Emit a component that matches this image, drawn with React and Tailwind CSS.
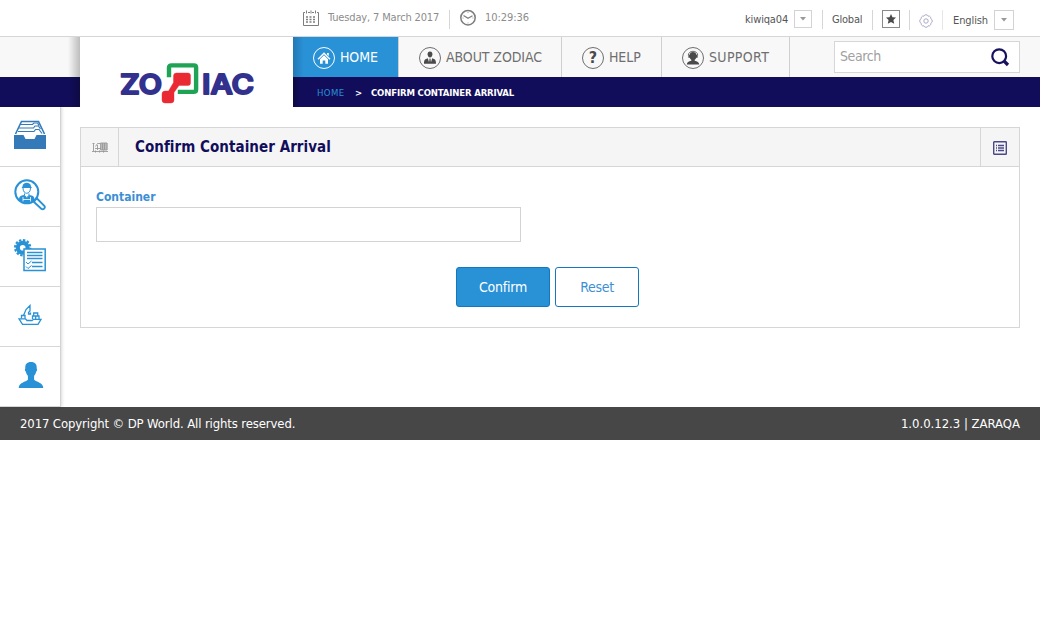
import React from "react";

function Label({ className = "", children }) {
  return <span className={"block shrink-0 whitespace-nowrap " + className}>{children}</span>;
}

function Divider({ className = "" }) {
  return <span className={"mt-[10px] h-[19px] w-px shrink-0 bg-[#d6d6d6] " + className} />;
}

function CalendarIcon() {
  return (
    <svg className="mt-[9px] shrink-0" width="16" height="17" viewBox="0 0 16 17" fill="none" stroke="#7d7d7d">
      <path d="M2 3.500H.5v13h15v-13H14M5 3.500h2M9 3.500h2" />
      <path d="M3.500 1.500v3M8 1.500v3M12.500 1.500v3" />
      <path d="M3 8h2m1.500 0h2M10 8h2M3 10.500h2m1.500 0h2m1.500 0h2M3 13h2m1.500 0h2m1.500 0h2" strokeWidth="1.300" />
    </svg>
  );
}

function ClockIcon() {
  return (
    <svg className="mt-[9px] shrink-0" width="16" height="17" viewBox="0 0 16 17" fill="none" stroke="#7d7d7d">
      <circle cx="8" cy="8.700" r="7.200" strokeWidth="1.500" />
      <path d="M3.500 6.500 8 9.200l4.500-2.500" strokeWidth="1.200" />
      <path d="M8 3v1M8 13.500v1M2.500 9h1M12.500 9h1" strokeWidth=".7" />
    </svg>
  );
}

function DropButton({ className }) {
  return (
    <span className={"mt-[10px] flex shrink-0 items-center justify-center border border-[#d3d3d3] " + className}>
      <svg width="6" height="4" viewBox="0 0 6 4" fill="#999">
        <path d="M0 0h6L3 3.500z" />
      </svg>
    </span>
  );
}

function TopBar() {
  return (
    <div className="flex h-[37px] border-b border-[#d6d6d6] pl-[303px] text-[11px] leading-[14px] text-[#555]">
      <CalendarIcon />
      <Label className="ml-[9px] mt-[11px] w-[121px] tracking-[-0.15px] text-[#8c8c8c]">Tuesday, 7 March 2017</Label>
      <Divider className="mr-[10px]" />
      <ClockIcon />
      <Label className="ml-[9px] mt-[11px] w-[260px] tracking-[-0.05px] text-[#8c8c8c]">10:29:36</Label>
      <Label className="mt-[13px] w-[49px] tracking-[-0.15px]">kiwiqa04</Label>
      <DropButton className="h-[18px] w-[18px]" />
      <Divider className="ml-[10px]" />
      <Label className="ml-[9px] mt-[13px] w-[40px] tracking-[-0.2px]">Global</Label>
      <Divider className="h-[20px]" />
      <span className="ml-[9px] mt-[10px] flex h-[18px] w-[18px] shrink-0 items-center justify-center border border-[#8a8a8a]">
        <svg width="10" height="10" viewBox="0 0 10 10" fill="#4a4a4a">
          <path d="m5 0 1.500 3.300 3.500.3-2.600 2.500.8 3.700L5 7.900 1.800 9.800l.8-3.700L0 3.600l3.500-.3z" />
        </svg>
      </span>
      <Divider className="ml-[9px] h-[20px]" />
      <svg className="ml-[9px] mt-[14px] shrink-0" width="14" height="14" viewBox="0 0 14 14" fill="none" stroke="#aaa9c9">
        <path d="M5.500 1.200 7 .7l1.500.5.6 1 1.300-.1 1.300 1.200.1 1.400 1 .8.500 1.500-.5 1.500-1 .8-.1 1.400-1.300 1.200-1.300-.1-.6 1-1.500.5-1.500-.5-.6-1-1.300.1-1.300-1.200-.1-1.400-1-.8L.7 7l.5-1.500 1-.8.1-1.400 1.300-1.200 1.300.1z" />
        <circle cx="7" cy="7" r="2.200" />
      </svg>
      <Divider className="ml-[9px] h-[20px] bg-[#e6e6e6]" />
      <Label className="ml-[10px] mt-[14px] w-[41px] tracking-[-0.1px]">English</Label>
      <DropButton className="h-[20px] w-[20px]" />
    </div>
  );
}

function Logo() {
  return (
    <svg width="134" height="41" viewBox="0 0 134 41" className="ml-[40px] mt-[26px]" fill="#33318e" stroke="#33318e" strokeWidth="1.800" strokeLinejoin="round">
      <g fontFamily="Inter, sans-serif" fontWeight="600" fontSize="27">
        <text x="0" y="30.700" textLength="42" lengthAdjust="spacingAndGlyphs">ZO</text>
        <text x="82" y="30.700" textLength="52" lengthAdjust="spacingAndGlyphs">IAC</text>
      </g>
      <path d="M49 12V4.500Q49 2.400 51.500 2.400H74Q76.100 2.400 76.100 4.500V26.500Q76.100 28.900 73.500 28.900H60" fill="none" stroke="#1fa455" strokeWidth="4.400" strokeLinecap="square" strokeLinejoin="miter" />
      <path d="M56.500 10h11.500q2.500 0 2.500 2.500v7.500q0 2.500-2.500 2.500H59L54 29.500v7.500q0 3-3 3H45q-3 0-3-3v-6q0-3 3-3h3.500l5-8.500V13q0-3 3-3z" fill="#ea2a33" stroke="#ea2a33" strokeWidth=".4" />
    </svg>
  );
}

function HomeGlyph() {
  return (
    <g>
      <path d="M4.500 11.700 11 5.300l6.500 6.400-1 1L11 7.300l-5.500 5.400zM14 6h1.800v3L14 7.500z" />
      <path d="m7 12.200 4-4 4 4v4.600h-2.700v-3.300H9.700v3.300H7z" />
    </g>
  );
}

function PersonGlyph() {
  return (
    <g fill="#4a4a4a">
      <path d="M11 4.500c1.700 0 2.500 1.100 2.400 2.800-.1 1.600-.9 3.200-2.400 3.200S8.700 8.900 8.600 7.300C8.500 5.600 9.300 4.500 11 4.500z" />
      <path d="M5 16.800c0-3.700.6-4.600 3.800-5.600l1.200 4 .5-2.600-.4-.9h1.800l-.4.9.5 2.600 1.200-4c3.200 1 3.800 1.900 3.800 5.600z" />
    </g>
  );
}

function SupportGlyph() {
  return (
    <g fill="#4a4a4a">
      <path d="M11 5c2.200 0 3.200 1.200 3.300 2.800h1.300v3h-1.400c-.3.900-.8 1.500-1.500 2v.9c2.600.5 4.300 1.300 4.500 3.700H4.800c.2-2.400 1.900-3.200 4.500-3.700v-.9c-.7-.5-1.200-1.100-1.500-2H6.400v-3h1.300C7.800 6.200 8.800 5 11 5z" />
      <path d="M6.300 8.200C6.300 3 15.700 3 15.700 8.200" fill="none" stroke="#4a4a4a" strokeWidth=".8" />
    </g>
  );
}

function NavItem({ className, glyph, mark, children }) {
  return (
    <a className={"flex h-[40px] shrink-0 border-r border-[#cfcfcf] pl-[20px] " + className}>
      <span className="mt-[10px] flex h-[22px] w-[22px] shrink-0 items-center justify-center rounded-full border border-current">
        {mark ? (
          <span className="text-[16px] font-bold leading-[20px] text-[#4a4a4a]">{mark}</span>
        ) : (
          <svg width="22" height="22" viewBox="0 0 22 22" fill="currentColor" className="shrink-0">
            {glyph}
          </svg>
        )}
      </span>
      <Label className="ml-[5px] mt-[11px] text-[14px] leading-[18px]">{children}</Label>
    </a>
  );
}

function Header() {
  return (
    <div className="flex h-[70px]">
      <div className="flex w-[80px] shrink-0 flex-col">
        <div className="h-[40px] bg-linear-to-r from-[#f8f8f8] from-85% to-[#bdbdbd]" />
        <div className="h-[30px] bg-linear-to-r from-[#120d5b] from-85% to-[#0d0a43]" />
      </div>
      <div className="w-[213px] shrink-0 bg-white">
        <Logo />
      </div>
      <div className="flex flex-1 flex-col">
        <div className="flex h-[40px] bg-[#f8f8f8] text-[#6f6f6f]">
          <NavItem className="w-[106px] bg-linear-to-r from-[#2279b3] to-[#2991d6] to-10% tracking-[-0.1px] text-white" glyph={<HomeGlyph />}>HOME</NavItem>
          <NavItem className="w-[163px] tracking-[-0.08px]" glyph={<PersonGlyph />}>ABOUT ZODIAC</NavItem>
          <NavItem className="w-[100px] tracking-[-0.1px]" mark="?">HELP</NavItem>
          <NavItem className="w-[128px] tracking-[0.35px]" glyph={<SupportGlyph />}>SUPPORT</NavItem>
          <div className="ml-[44px] mt-[4px] flex h-[32px] w-[186px] border border-[#d6d6d6] bg-white pl-[5px]">
            <Label className="mt-[5px] w-[150px] text-[14px] leading-[18px] tracking-[-0.4px] text-[#a0a0a0]">Search</Label>
            <svg className="mt-[5px] shrink-0" width="20" height="20" viewBox="0 0 20 20" fill="none" stroke="#17125d">
              <circle cx="9.200" cy="9.200" r="6.900" strokeWidth="2.200" />
              <path d="m14 14 4 4" strokeWidth="3.200" />
            </svg>
          </div>
        </div>
        <div className="flex h-[30px] bg-linear-to-r from-[#0d0a43] to-[#120d5b] to-1% pl-[24px] pt-[9px] text-[9.5px] leading-[13px] text-white">
          <Label className="w-[38px] tracking-[0.4px] text-[#2991d6]">HOME</Label>
          <Label className="w-[16px] font-bold">&gt;</Label>
          <Label className="font-bold tracking-[-0.15px]">CONFIRM CONTAINER ARRIVAL</Label>
        </div>
      </div>
    </div>
  );
}

function TrayIcon() {
  return (
    <svg width="32" height="30" viewBox="0 0 32 30" fill="#357ab8">
      <path d="M0 15h9.500l2 4h9l2-4H32v14H0z" />
      <g fill="none" stroke="#357ab8">
        <path d="M1.500 14 7.500 1.500h17l6 12.500" strokeWidth="1.600" />
        <path d="M6.500 4.500h12l1.500-1.500h3.500l1.500 2.500M5 8h14.500l1.500-2h3.500l2 3M4 11.500h16l1.500-2H25l3 4" strokeWidth="1.200" />
      </g>
    </svg>
  );
}

function InspectIcon() {
  return (
    <svg width="32" height="32" viewBox="0 0 32 32" fill="none" stroke="#2991d6">
      <circle cx="12.800" cy="12.800" r="11.500" strokeWidth="2" />
      <path d="m21 21 2-1.500 7.500 7.500c1 2-1 4-3 3L20 23z" strokeWidth="1.900" />
      <path d="M8.500 7.500c0-5 8.500-5 8.500 0l1 1.500H7.500z" fill="#2991d6" stroke="none" />
      <path d="M9 9c0 7 7.500 7 7.500 0M10.500 14.500v2l2.300 2 2.200-2v-2" />
      <path d="M5 21c0-4 2-4.500 5-5l2.800 3 2.700-3c3 .5 5 1 5 5-4 4-11.500 4-15.500 0z" fill="#2991d6" stroke="none" />
      <path d="M9 18v4.500M16.500 18v4.500M9 20.500h7.500" stroke="white" strokeWidth=".8" />
    </svg>
  );
}

function TasksIcon() {
  return (
    <svg width="32" height="33" viewBox="0 0 32 33" fill="none" stroke="#2991d6">
      <circle cx="8.700" cy="8.700" r="4.900" strokeWidth="4.200" />
      <circle cx="8.700" cy="8.700" r="7.700" strokeWidth="2" strokeDasharray="2.400 1.632" />
      <path d="M10 10h21.200v21.500H10z" fill="white" strokeWidth="1.500" />
      <path d="M13 13.500h15.500M13 16.500h15.500M13 19.500h15.500M18 23.500h10.500M18 27.500h10.500" strokeWidth="1.500" />
      <path d="m12 23 2 2 3.500-3M12 27.500l2 2 3.500-3" />
    </svg>
  );
}

function ShipIcon() {
  return (
    <svg width="24" height="22" viewBox="0 0 24 22" fill="none" stroke="#2991d6" strokeWidth="1.300">
      <path d="M1 14.800h6.500l1.500 1.700h5l1.500-1.200h7.500l-3 5H4.500z" />
      <path d="M3.500 14.500v-3h3.500v3M5.500 11.500 8 5.500 12 1.500v5.500L10.500 8.500v1.500h2V8.500M14.500 15v-3h6.500v3M17.700 15v-3M15.700 12V9h4v3" />
    </svg>
  );
}

function UserIcon() {
  return (
    <svg width="26" height="27" viewBox="0 0 26 27" fill="#2991d6">
      <path d="M13 0c4.200 0 6 2.300 5.700 6.500.8.700.4 2.500-.6 3.300-.3 1.700-1 3-2 4v4c2 2 9.200 3 9.200 8.200H.7c0-5.200 7.200-6.200 9.200-8.200v-4c-1-1-1.700-2.300-2-4-1-.8-1.400-2.600-.6-3.300C7 2.300 8.800 0 13 0z" />
    </svg>
  );
}

function Sidebar() {
  const items = [
    [<TrayIcon key="i" />, "pt-[13px]"],
    [<InspectIcon key="i" />, "pt-[12px]"],
    [<TasksIcon key="i" />, "pt-[12px]"],
    [<ShipIcon key="i" />, "pt-[17px]"],
    [<UserIcon key="i" />, "pt-[15px] pl-px"],
  ];
  return (
    <nav className="w-[61px] shrink-0 border-r border-[#d3d3d3] shadow-[1px_0_3px_rgba(0,0,0,0.15)]">
      {items.map(([icon, pad], i) => (
        <a key={i} className={"flex h-[60px] justify-center border-b border-[#d6d6d6] " + pad}>
          {icon}
        </a>
      ))}
    </nav>
  );
}

function Panel() {
  return (
    <section className="ml-[19px] mt-[20px] h-[201px] w-[940px] border border-[#d6d6d6]">
      <div className="flex h-[39px] border-b border-[#d6d6d6] bg-[#f5f5f5]">
        <div className="w-[38px] shrink-0 border-r border-[#d6d6d6] pl-[11px] pt-[14px]">
          <svg width="16" height="11" viewBox="0 0 16 11" fill="none" stroke="#999">
            <path d="M9 1h6.500v7H9z" fill="#bbb" stroke="none" />
            <path d="M.5 1.500h2M1.500 1v8M3.500 4.500l2-3h3M5.500 3v5M8.500 1h6.500v7H8.500zM10.500 1v7M12.500 1v7M3 6.500h5.500M0 9.500h16" strokeWidth=".9" />
            <path d="M3.500 8.500v2M7.500 8.500v2M11.500 8.500v2" />
          </svg>
        </div>
        <h1 className="flex-1 whitespace-nowrap pl-[16px] pt-[9px] text-[15px] font-bold leading-[20px] tracking-[0.05px] text-[#120d5b]">Confirm Container Arrival</h1>
        <div className="w-[39px] shrink-0 border-l border-[#d6d6d6] pl-[12px] pt-[13px]">
          <svg width="14" height="14" viewBox="0 0 14 14" fill="none" stroke="#4b4889">
            <rect x=".7" y=".7" width="12.600" height="12.600" rx=".6" strokeWidth="1.400" />
            <path d="M3 4.500h1M5 4.500h6M3 7h1M5 7h6M3 9.500h1M5 9.500h6" strokeWidth="1.300" />
          </svg>
        </div>
      </div>
      <div className="pl-[15px] pt-[22px]">
        <label className="block text-[12px] font-bold leading-[16px] text-[#3c8fd3]">Container</label>
        <div className="mt-[2px] h-[35px] w-[425px] border border-[#d3d3d3]" />
      </div>
      <div className="flex gap-[5px] pl-[375px] pt-[25px] text-[14px] leading-[38px]">
        <button className="h-[40px] w-[94px] rounded-[3px] border border-[#1478be] bg-[#2991d6] tracking-[-0.25px] text-white">Confirm</button>
        <button className="h-[40px] w-[84px] rounded-[3px] border border-[#1478be] bg-white tracking-[-0.3px] text-[#3c8fd3]">Reset</button>
      </div>
    </section>
  );
}

export default function App() {
  return (
    <div className="h-[622px] w-[1040px] overflow-hidden bg-white font-['DejaVu_Sans_Condensed','DejaVu_Sans',sans-serif] [font-stretch:condensed]">
      <TopBar />
      <Header />
      <div className="flex h-[300px]">
        <Sidebar />
        <Panel />
      </div>
      <footer className="flex h-[33px] justify-between bg-[#474747] px-[20px] pt-[9px] text-[13px] leading-[16px] text-white">
        <Label className="tracking-[-0.12px]">2017 Copyright © DP World. All rights reserved.</Label>
        <Label className="tracking-[-0.02px]">1.0.0.12.3 | ZARAQA</Label>
      </footer>
    </div>
  );
}
